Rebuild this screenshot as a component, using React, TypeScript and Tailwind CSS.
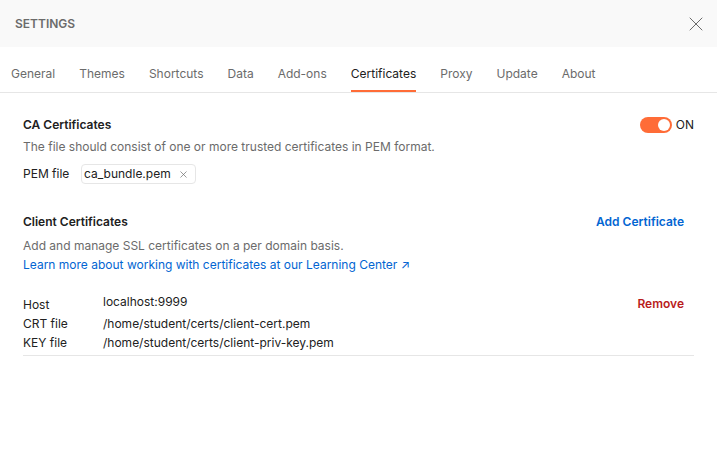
import { X } from "lucide-react"

const tabs = ["General", "Themes", "Shortcuts", "Data", "Add-ons", "Certificates", "Proxy", "Update", "About"]

export default function App() {
  return (
    <div className="w-[717px] h-[463px] bg-white text-[#212121] font-['Inter',sans-serif] overflow-hidden">
      <div className="h-[47px] bg-[#f9f9f9] flex items-center justify-between pl-[15px] pr-[9px]">
        <span className="text-[12px] font-semibold text-[#6b6b6b]">SETTINGS</span>
        <X className="w-[24px] h-[24px] text-[#6b6b6b]" strokeWidth={1} />
      </div>

      <div className="h-[46px] border-b border-[#e6e6e6] flex items-stretch pl-[11px] gap-[24px] text-[12px] text-[#6b6b6b]">
        {tabs.map((t) => (
          <div
            key={t}
            className={
              t === "Certificates"
                ? "flex items-center pt-[10px] border-b-2 border-[#ff6c37] text-[#212121]"
                : "flex items-center pt-[10px] border-b-2 border-transparent"
            }
          >
            {t}
          </div>
        ))}
      </div>

      <div className="px-[23px] pt-[23px]">
        <div className="flex items-center justify-between">
          <span className="text-[12px] font-semibold">CA Certificates</span>
          <div className="flex items-center gap-[4px]">
            <div className="w-[32px] h-[16px] rounded-full bg-[#ff6c37] flex items-center justify-end pr-[2px]">
              <div className="w-[12px] h-[12px] rounded-full bg-white" />
            </div>
            <span className="text-[12px]">ON</span>
          </div>
        </div>
        <p className="text-[12px] text-[#6b6b6b] mt-[4px]">
          The file should consist of one or more trusted certificates in PEM format.
        </p>
        <div className="flex items-center mt-[8px] text-[12px]">
          <span className="w-[58px]">PEM file</span>
          <div className="h-[20px] flex items-center gap-[7px] border border-[#e6e6e6] rounded-[4px] pl-[2px] pr-[6px]">
            <span>ca_bundle.pem</span>
            <X className="w-[11px] h-[11px] text-[#6b6b6b]" strokeWidth={1.5} />
          </div>
        </div>

        <div className="flex items-center justify-between mt-[29px] pr-[10px]">
          <span className="text-[12px] font-semibold">Client Certificates</span>
          <span className="text-[12px] font-semibold text-[#0265d2]">Add Certificate</span>
        </div>
        <p className="text-[12px] text-[#6b6b6b] mt-[6px]">Add and manage SSL certificates on a per domain basis.</p>
        <p className="text-[12px] text-[#0265d2] mt-[1px]">
          Learn more about working with certificates at our Learning Center ↗
        </p>

        <div className="mt-[19px] pb-[3px] border-b border-[#e6e6e6] text-[12px]">
          <div className="flex items-center justify-between pr-[10px]">
            <div className="flex">
              <span className="w-[80px] pt-[3px]">Host</span>
              <span>localhost:9999</span>
            </div>
            <span className="font-semibold text-[#b91c1c]">Remove</span>
          </div>
          <div className="flex mt-[1px]">
            <span className="w-[80px]">CRT file</span>
            <span>/home/student/certs/client-cert.pem</span>
          </div>
          <div className="flex mt-[1px]">
            <span className="w-[80px]">KEY file</span>
            <span>/home/student/certs/client-priv-key.pem</span>
          </div>
        </div>
      </div>
    </div>
  )
}
